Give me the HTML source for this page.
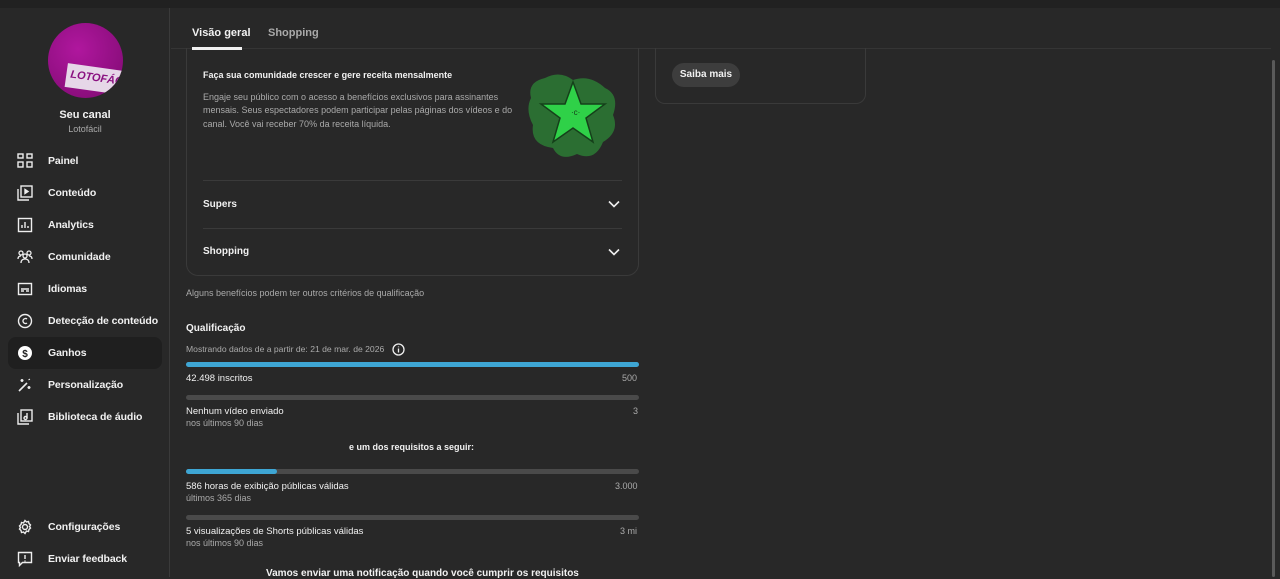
<!DOCTYPE html>
<html><head><meta charset="utf-8"><style>
*{box-sizing:border-box;margin:0;padding:0}
body{width:1280px;height:577px;overflow:hidden;background:#282828;font-family:"Liberation Sans",Arial,sans-serif;color:#f1f1f1;position:relative;font-size:12px}
.top{position:absolute;left:0;top:0;width:1280px;height:8px;background:#212121}
.side{position:absolute;left:0;top:8px;width:170px;height:569px;border-right:1px solid #3a3a3a}
.av{position:absolute;left:48px;top:15px;width:75px;height:75px;border-radius:50%;background:radial-gradient(circle at 40% 35%,#b0179e,#7d0a70);overflow:hidden}
.av .b{position:absolute;left:18px;top:44px;width:58px;height:24px;background:#e6d7e8;transform:rotate(8deg);color:#8a1080;font-weight:bold;font-size:11px;font-style:italic;padding:5px 0 0 4px}
.name{position:absolute;left:0;width:170px;text-align:center}
.nav{position:absolute;left:8px;width:154px;height:32px;border-radius:8px;display:flex;align-items:center}
.nav svg{position:absolute;left:9px;top:8px}
.nav span{position:absolute;left:40px;font-size:10.5px;font-weight:bold;color:#f1f1f1;white-space:nowrap;letter-spacing:-0.1px}
.sel{background:#1f1f1f}
.tabs{position:absolute;left:171px;top:8px;width:1100px;height:41px;border-bottom:1px solid #353535}
.tab{position:absolute;top:19px;font-size:11px;font-weight:bold}
.card{position:absolute;left:186px;top:48px;width:453px;height:228px;border:1px solid #3a3a3a;border-top:none;border-radius:0 0 12px 12px}
.rcard{position:absolute;left:655px;top:48px;width:211px;height:56px;border:1px solid #3a3a3a;border-top:none;border-radius:0 0 10px 10px}
.btn{position:absolute;left:16px;top:15px;width:68px;height:24px;border-radius:12px;background:#3d3d3d;font-size:10px;font-weight:bold;text-align:center;line-height:24px}
.t{position:absolute;white-space:nowrap}
.g{color:#aaa}
.bar{position:absolute;left:186px;width:453px;height:5px;border-radius:3px;background:#4a4a4a}
.bar i{display:block;height:5px;border-radius:3px;background:#3ea6d4}
.hr{position:absolute;left:203px;width:419px;height:1px;background:#3a3a3a}
</style></head><body>
<div class="top"></div>
<div class="side">
<div class="av"><div class="b">LOTOFÁC</div></div>
<div class="name" style="top:101px;font-size:11px;font-weight:bold">Seu canal</div>
<div class="name" style="top:116px;font-size:9px;color:#aaa">Lotofácil</div>
</div>
<div class="nav" style="top:145px"><svg width="16" height="16" viewBox="0 0 16 16" fill="none" stroke="#eee" stroke-width="1.4"><rect x="1" y="1" width="5" height="4"/><rect x="10" y="1" width="5" height="4"/><rect x="1" y="9" width="5" height="5"/><rect x="10" y="9" width="5" height="5"/></svg><span>Painel</span></div>
<div class="nav" style="top:177px"><svg width="16" height="16" viewBox="0 0 16 16" fill="none" stroke="#eee" stroke-width="1.4"><rect x="4" y="1" width="11" height="11"/><path d="M1 4v11h11"/><path d="M8 4.5l3 2-3 2z" fill="#eee"/></svg><span>Conteúdo</span></div>
<div class="nav" style="top:209px"><svg width="16" height="16" viewBox="0 0 16 16" fill="none" stroke="#eee" stroke-width="1.4"><rect x="1.5" y="1.5" width="13" height="13"/><path d="M5 11V8M8 11V5M11 11V9"/></svg><span>Analytics</span></div>
<div class="nav" style="top:241px"><svg width="16" height="16" viewBox="0 0 16 16" fill="none" stroke="#eee" stroke-width="1.3"><circle cx="4" cy="4" r="2"/><circle cx="12" cy="4" r="2"/><circle cx="8" cy="7" r="2"/><path d="M4 14c0-3 2-4 4-4s4 1 4 4M1 10c0-2 1-3 3-3M15 10c0-2-1-3-3-3"/></svg><span>Comunidade</span></div>
<div class="nav" style="top:273px"><svg width="16" height="16" viewBox="0 0 16 16" fill="none" stroke="#eee" stroke-width="1.4"><rect x="1.5" y="2.5" width="13" height="11"/><path d="M4 10h3M9 10h3M4 8h8"/></svg><span>Idiomas</span></div>
<div class="nav" style="top:305px"><svg width="16" height="16" viewBox="0 0 16 16" fill="none" stroke="#eee" stroke-width="1.4"><circle cx="8" cy="8" r="6.5"/><path d="M10 6a2.5 2.5 0 1 0 0 4"/></svg><span>Detecção de conteúdo</span></div>
<div class="nav sel" style="top:337px"><svg width="16" height="16" viewBox="0 0 16 16"><circle cx="8" cy="8" r="7" fill="#fff"/><text x="8" y="12" font-size="10" font-weight="bold" text-anchor="middle" fill="#1f1f1f" font-family="Liberation Sans">$</text></svg><span>Ganhos</span></div>
<div class="nav" style="top:369px"><svg width="16" height="16" viewBox="0 0 16 16" fill="none" stroke="#eee" stroke-width="1.6"><path d="M2 14l8-8"/><path d="M5 2v3M3.5 3.5h3M12 9v3M10.5 10.5h3M12 2l.5 1" /></svg><span>Personalização</span></div>
<div class="nav" style="top:401px"><svg width="16" height="16" viewBox="0 0 16 16" fill="none" stroke="#eee" stroke-width="1.4"><rect x="4" y="1" width="11" height="11"/><path d="M1 4v11h11M10 4v5"/><circle cx="8.5" cy="9" r="1.5"/></svg><span>Biblioteca de áudio</span></div>
<div class="nav" style="top:511px"><svg width="16" height="16" viewBox="0 0 16 16" fill="none" stroke="#eee" stroke-width="1.4"><circle cx="8" cy="8" r="2.5"/><path d="M8 1.5l1.5 1.5 2-.5.5 2 1.5 1.5-1 1.5 1 1.5-1.5 1.5-.5 2-2-.5L8 14.5 6.5 13l-2 .5-.5-2L2.5 10l1-1.5-1-1.5L4 5.5l.5-2 2 .5z"/></svg><span>Configurações</span></div>
<div class="nav" style="top:543px"><svg width="16" height="16" viewBox="0 0 16 16" fill="none" stroke="#eee" stroke-width="1.4"><path d="M1.5 1.5h13v10h-9l-3 3v-3h-1z"/><path d="M8 4v4M8 9.5v1"/></svg><span>Enviar feedback</span></div>

<div class="tabs">
<div class="tab" style="left:21px">Visão geral</div>
<div class="tab" style="left:97px;color:#aaa">Shopping</div>
<div style="position:absolute;left:21px;top:39px;width:50px;height:3px;background:#f1f1f1"></div>
</div>

<div class="card"></div>
<div class="t" style="left:203px;top:70px;font-size:9px;font-weight:bold">Faça sua comunidade crescer e gere receita mensalmente</div>
<div class="t g" style="left:203px;top:91px;font-size:9px;line-height:13.3px">Engaje seu público com o acesso a benefícios exclusivos para assinantes<br>mensais. Seus espectadores podem participar pelas páginas dos vídeos e do<br>canal. Você vai receber 70% da receita líquida.</div>
<svg style="position:absolute;left:525px;top:70px" width="95" height="92" viewBox="0 0 95 92"><path d="M20 8 Q35 0 48 10 Q65 4 80 18 Q95 25 88 45 Q95 62 78 72 Q70 92 52 84 Q35 92 28 78 Q5 75 8 55 Q0 40 6 28 Q2 12 20 8Z" fill="#2b6e32"/><path d="M48 12 L56 34 L80 34 L61 48 L68 72 L48 58 L28 72 L35 48 L16 34 L40 34Z" fill="#2fd148" stroke="#15401a" stroke-width="1.5"/><text x="46" y="45" font-size="8" fill="#15401a" font-family="Liberation Sans">·c·</text></svg>
<div class="hr" style="top:180px"></div>
<div class="t" style="left:203px;top:199px;font-size:10px;font-weight:bold">Supers</div>
<svg style="position:absolute;left:608px;top:200px" width="12" height="8" viewBox="0 0 12 8" fill="none" stroke="#eee" stroke-width="1.6"><path d="M1 1.5l5 5 5-5"/></svg>
<div class="hr" style="top:228px"></div>
<div class="t" style="left:203px;top:246px;font-size:10px;font-weight:bold">Shopping</div>
<svg style="position:absolute;left:608px;top:248px" width="12" height="8" viewBox="0 0 12 8" fill="none" stroke="#eee" stroke-width="1.6"><path d="M1 1.5l5 5 5-5"/></svg>

<div class="rcard"><div class="btn">Saiba mais</div></div>
<div style="position:absolute;left:1272px;top:60px;width:3px;height:517px;background:#5a5a5a;border-radius:2px"></div>

<div class="t g" style="left:186px;top:288px;font-size:9px">Alguns benefícios podem ter outros critérios de qualificação</div>
<div class="t" style="left:186px;top:323px;font-size:10px;font-weight:bold">Qualificação</div>
<div class="t g" style="left:186px;top:344px;font-size:8.6px">Mostrando dados de a partir de: 21 de mar. de 2026</div>
<svg style="position:absolute;left:392px;top:343px" width="13" height="13" viewBox="0 0 13 13" fill="none" stroke="#eee" stroke-width="1.3"><circle cx="6.5" cy="6.5" r="5.5"/><path d="M6.5 5.5v4M6.5 3.5v.8"/></svg>
<div class="bar" style="top:362px"><i style="width:100%"></i></div>
<div class="t" style="left:186px;top:373px;font-size:9.5px">42.498 inscritos</div>
<div class="t g" style="left:622px;top:373px;font-size:9px">500</div>
<div class="bar" style="top:395px"></div>
<div class="t" style="left:186px;top:406px;font-size:9.5px">Nenhum vídeo enviado</div>
<div class="t g" style="left:186px;top:418px;font-size:9px">nos últimos 90 dias</div>
<div class="t g" style="left:633px;top:406px;font-size:9px">3</div>
<div class="t" style="left:349px;top:442px;font-size:9px;font-weight:bold">e um dos requisitos a seguir:</div>
<div class="bar" style="top:469px"><i style="width:20%"></i></div>
<div class="t" style="left:186px;top:481px;font-size:9.5px">586 horas de exibição públicas válidas</div>
<div class="t g" style="left:186px;top:493px;font-size:9px">últimos 365 dias</div>
<div class="t g" style="left:615px;top:481px;font-size:9px">3.000</div>
<div class="bar" style="top:515px"></div>
<div class="t" style="left:186px;top:526px;font-size:9.5px">5 visualizações de Shorts públicas válidas</div>
<div class="t g" style="left:186px;top:538px;font-size:9px">nos últimos 90 dias</div>
<div class="t g" style="left:620px;top:526px;font-size:9px">3 mi</div>
<div class="t" style="left:266px;top:568px;font-size:10px;font-weight:bold">Vamos enviar uma notificação quando você cumprir os requisitos</div>
</body></html>
